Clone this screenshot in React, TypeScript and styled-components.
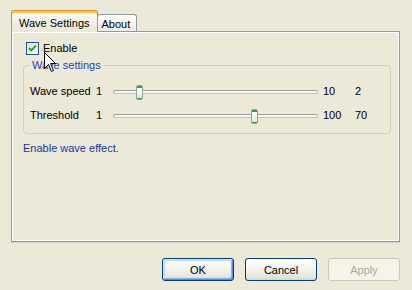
import styled, { createGlobalStyle } from 'styled-components'

const GlobalStyle = createGlobalStyle`
  html, body {
    margin: 0;
    padding: 0;
    background: #ece9d8;
  }
  body {
    font-family: "Liberation Sans", Arial, sans-serif;
    font-size: 11px;
    color: #000;
  }
`

const Dialog = styled.div`
  position: relative;
  width: 412px;
  height: 290px;
  box-sizing: border-box;
  padding: 10px 12px 0 11px;
  background: #ece9d8;
`

const TabStrip = styled.div`
  position: relative;
  z-index: 1;
  display: flex;
  align-items: flex-end;
  height: 21px;
`

const Tab = styled.div<{ $active?: boolean }>`
  box-sizing: border-box;
  display: flex;
  align-items: center;
  border: 1px solid #919b9c;
  border-bottom: none;
  border-radius: 3px 3px 0 0;
  white-space: nowrap;
  ${({ $active }) =>
    $active
      ? `
    height: 22px;
    margin-bottom: -1px;
    padding: 2px 7px 0;
    border-top-color: #e68b2c;
    box-shadow: inset 0 2px 0 #ffc83c;
    background: linear-gradient(#fcfcfe, #ece9d8 80%);
    position: relative;
    z-index: 2;
  `
      : `
    height: 17px;
    margin-left: -1px;
    padding: 1px 6px 0 4px;
    background: linear-gradient(#ffffff, #ecebe6);
  `}
`

const Panel = styled.div`
  box-sizing: border-box;
  width: 389px;
  height: 211px;
  padding: 10px 0 0 11px;
  border: 1px solid #919b9c;
  background: #ece9d8;
  box-shadow: inset 0 0 0 1px #fff, 0 1px 0 #d2cfbf;
`

const CheckRow = styled.label`
  display: flex;
  align-items: center;
  gap: 4px;
  height: 13px;
  margin-left: 3px;
  line-height: 13px;
`

const GroupBox = styled.fieldset`
  box-sizing: border-box;
  width: 368px;
  margin: 4px 0 0;
  padding: 7px 0 6px 6px;
  border: 1px solid #d0d0bf;
  border-radius: 4px;
`

const GroupLabel = styled.legend`
  padding: 0 2px;
  line-height: 13px;
  color: #1d40c0;
`

const SliderRow = styled.div`
  display: grid;
  grid-template-columns: 66px 17px 205px 37px 1fr;
  align-items: center;
  height: 24px;
`

const Cell = styled.span<{ $pad?: number }>`
  padding-left: ${({ $pad }) => $pad ?? 0}px;
  line-height: 13px;
`

const SliderBox = styled.div`
  position: relative;
  display: flex;
  align-items: center;
  height: 24px;
  padding-top: 2px;
  box-sizing: border-box;
`

const Track = styled.div`
  box-sizing: border-box;
  width: 205px;
  height: 4px;
  border: 1px solid #c4c2b6;
  border-top-color: #9d9d92;
  border-left-color: #a7a69b;
  border-radius: 2px;
  background: #f7f7f3;
`

const Thumb = styled.span`
  position: absolute;
  top: 6px;
  width: 7px;
  height: 15px;
  box-sizing: border-box;
  border: 1px solid #94a594;
  border-radius: 2px;
  background: linear-gradient(
    #2ea23a 0 2px,
    #fdfdfb 2px,
    #e6e5dd 12px,
    #2ea23a 12px
  );
`

const Hint = styled.div`
  margin-top: 8px;
  line-height: 13px;
  color: #1a33aa;
`

const ButtonRow = styled.div`
  display: flex;
  justify-content: flex-end;
  gap: 11px;
  margin-top: 16px;
  width: 389px;
`

const Button = styled.button<{ $default?: boolean }>`
  width: 72px;
  height: 23px;
  padding: 0;
  font: inherit;
  color: #000;
  border: 1px solid #003c74;
  border-radius: 3px;
  background: linear-gradient(#ffffff, #f0efe8 60%, #e3e1d6 92%, #d6d0c5);
  ${({ $default }) =>
    $default &&
    `
    box-shadow: inset 1px 1px 0 #cee7ff, inset -1px -1px 0 #6982ee,
      inset 2px 2px 0 #bcd4f6, inset -2px -2px 0 #89adf4;
  `}
  &:disabled {
    color: #aca899;
    border-color: #c9c7ba;
    background: #f5f4ea;
  }
`

const Cursor = styled.svg`
  position: absolute;
  left: 44px;
  top: 52px;
  z-index: 5;
`

const CheckBox = () => (
  <svg width="13" height="13" viewBox="0 0 13 13">
    <defs>
      <linearGradient id="cbg" x1="0" y1="0" x2="1" y2="1">
        <stop offset="0" stopColor="#dcdcd7" />
        <stop offset="1" stopColor="#ffffff" />
      </linearGradient>
    </defs>
    <rect x="0.5" y="0.5" width="12" height="12" fill="url(#cbg)" stroke="#1c5180" />
    <path d="M3 6 L5.2 8.4 L10 3.6" fill="none" stroke="#21a121" strokeWidth="2" />
  </svg>
)

type SliderProps = { label: string; min: number; max: number; value: number }

const Slider = ({ label, min, max, value }: SliderProps) => {
  const left = 4 + ((value - min) / (max - min)) * 196 - 3
  return (
    <SliderRow>
      <Cell>{label}</Cell>
      <Cell>{min}</Cell>
      <SliderBox>
        <Track />
        <Thumb style={{ left }} />
      </SliderBox>
      <Cell $pad={5}>{max}</Cell>
      <Cell>{value}</Cell>
    </SliderRow>
  )
}

export default function App() {
  return (
    <>
      <GlobalStyle />
      <Dialog>
        <TabStrip>
          <Tab $active>Wave Settings</Tab>
          <Tab>About</Tab>
        </TabStrip>
        <Panel>
          <CheckRow>
            <CheckBox />
            <span>Enable</span>
          </CheckRow>
          <GroupBox>
            <GroupLabel>Wave settings</GroupLabel>
            <Slider label="Wave speed" min={1} max={10} value={2} />
            <Slider label="Threshold" min={1} max={100} value={70} />
          </GroupBox>
          <Hint>Enable wave effect.</Hint>
        </Panel>
        <ButtonRow>
          <Button $default>OK</Button>
          <Button>Cancel</Button>
          <Button disabled>Apply</Button>
        </ButtonRow>
        <Cursor width="13" height="21" viewBox="0 0 13 21">
          <path
            d="M0.5 0.5 L0.5 16.5 L4.5 12.5 L7.5 19.5 L9.5 18.5 L6.5 11.5 L11.5 11.5 Z"
            fill="#fff"
            stroke="#000"
            strokeLinejoin="miter"
          />
        </Cursor>
      </Dialog>
    </>
  )
}
